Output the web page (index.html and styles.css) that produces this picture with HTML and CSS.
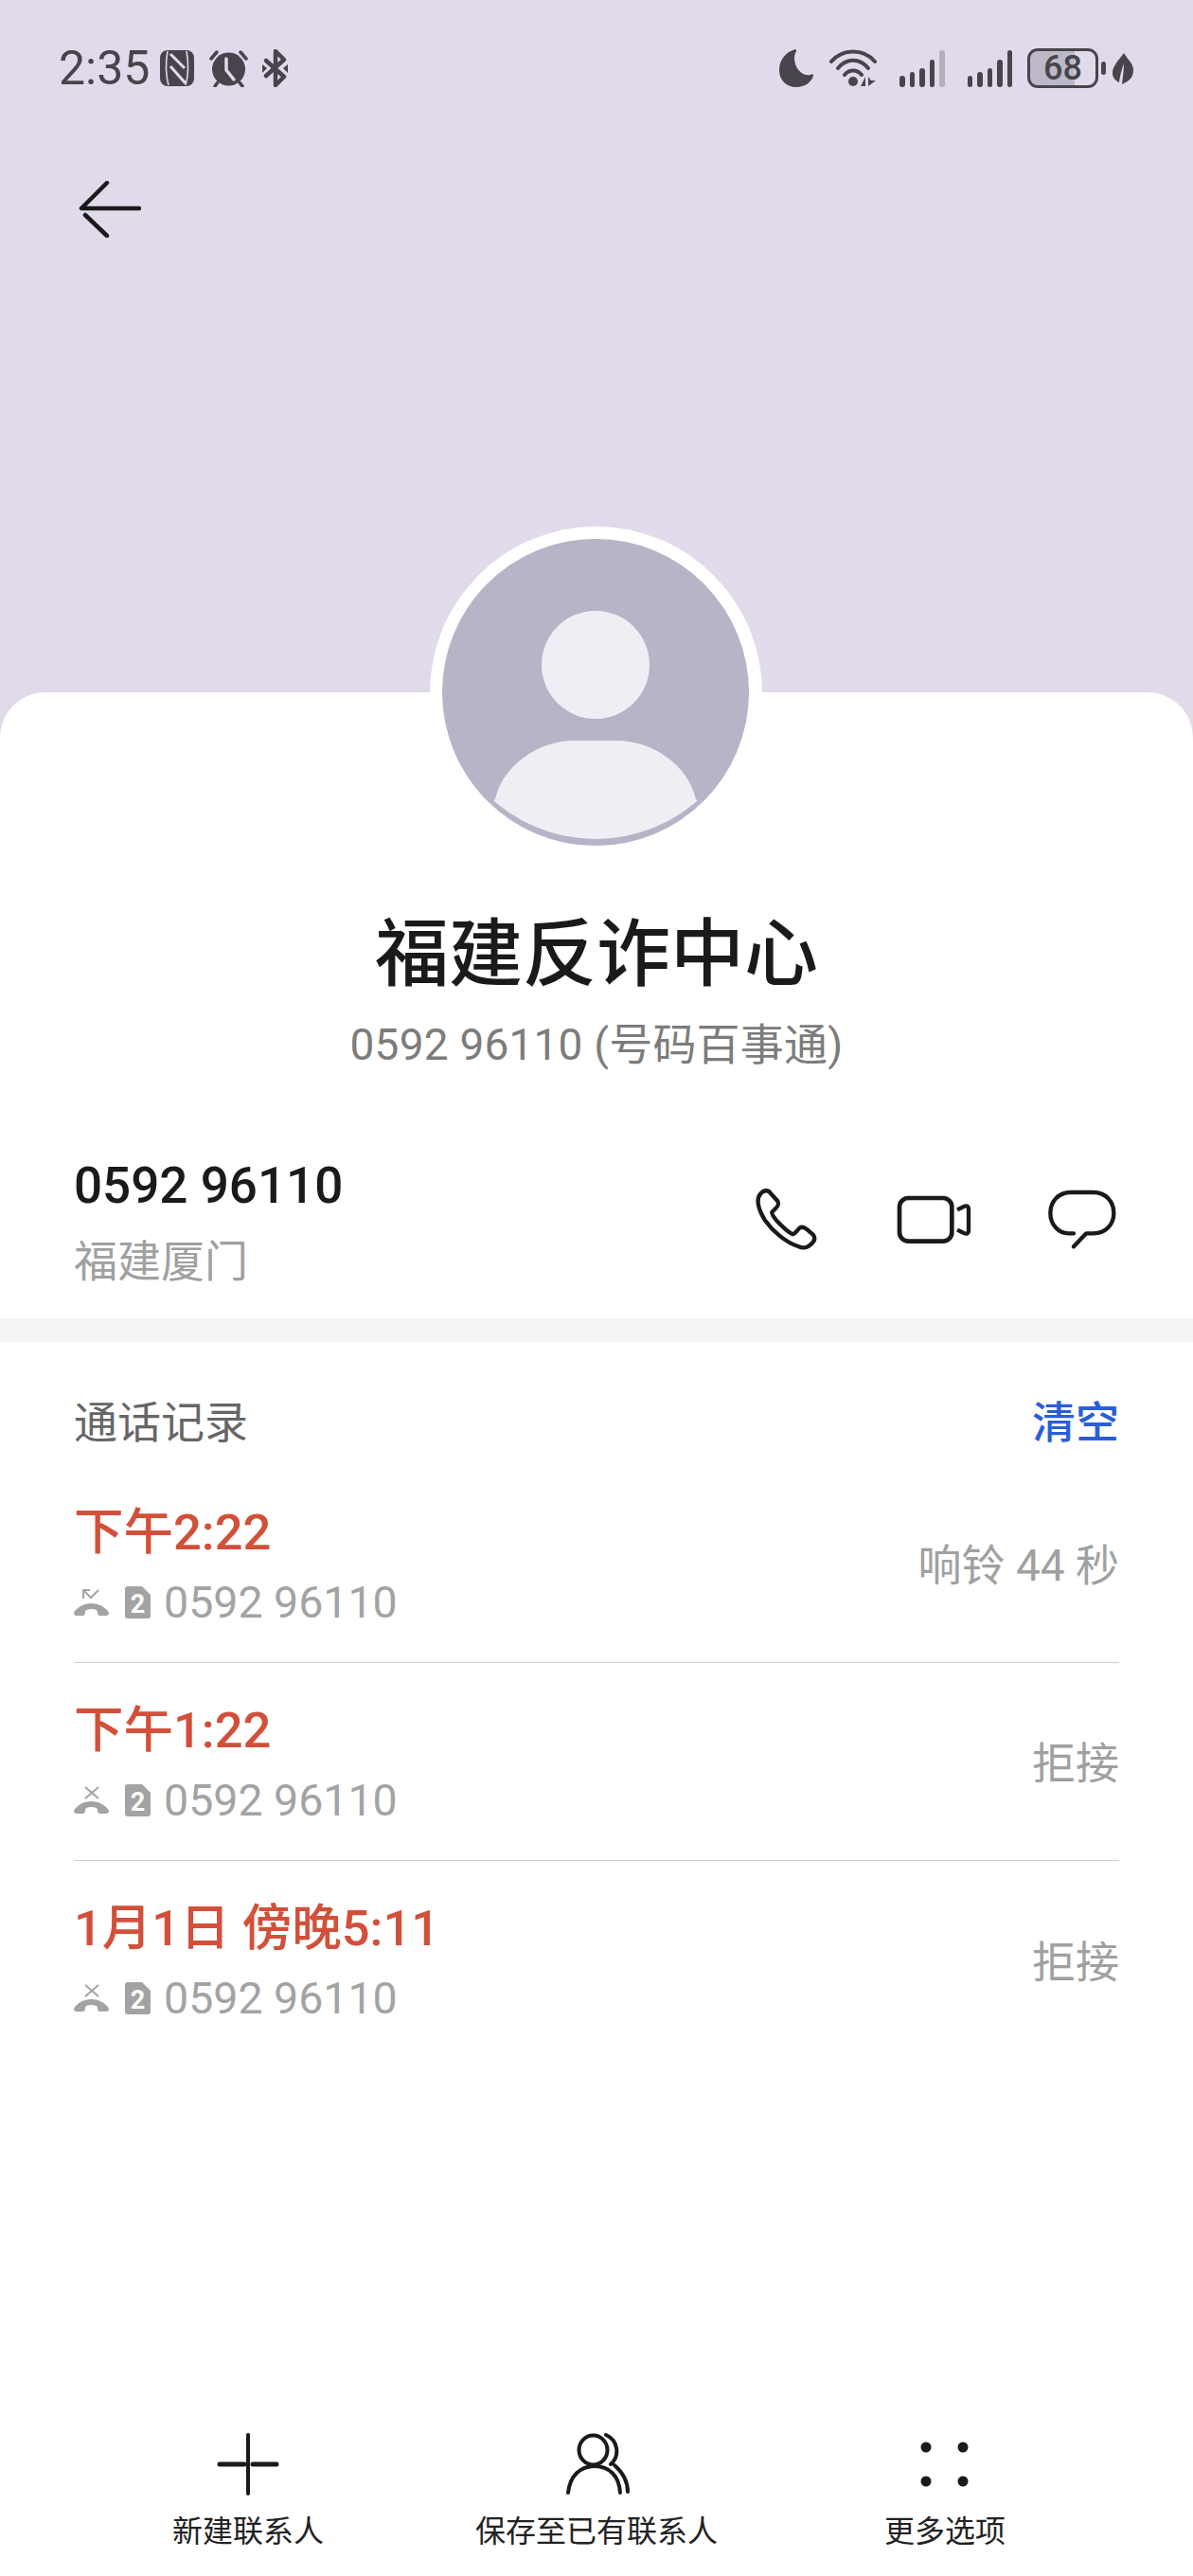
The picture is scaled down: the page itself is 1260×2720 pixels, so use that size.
FILE: index.html
```html
<!DOCTYPE html>
<html lang="zh-CN">
<head>
    <meta charset="UTF-8">
    <title>福建反诈中心</title>
    <link rel="stylesheet" href="styles.css">
</head>
<body>

<div class="screen">
    <header class="hero">
        <div class="status-bar">
            <div class="status-left">
                <span class="clock">2:35</span>
                <svg class="ic-nfc" viewBox="0 0 36 38"><rect width="36" height="38" rx="8" fill="#47444b"/><path d="M8 1C6 12 6 26 9 37M28 1C30 12 30 26 27 37" fill="none" stroke="#e1daea" stroke-width="1.6"/><path d="M11 4L26 19M11 17L27 35" fill="none" stroke="#e1daea" stroke-width="3"/></svg>
                <svg class="ic-alarm" viewBox="0 0 41 39"><circle cx="20.500" cy="20" r="17.500" fill="#47444b"/><path d="M2 9L8 2M39 9L33 2M6 38L9 34M35 38L32 34" stroke="#47444b" stroke-width="3.500" stroke-linecap="round"/><path d="M18 9V21L26 31" fill="none" stroke="#e1daea" stroke-width="3.500" stroke-linecap="round"/></svg>
                <svg class="ic-bt" viewBox="0 0 27 40"><path d="M4 12L23 29L14 38V2L23 11L4 28" fill="none" stroke="#47444b" stroke-width="4.500" stroke-linecap="round" stroke-linejoin="round"/><path d="M0 16L5 20L0 25ZM27 16L22 20L27 25Z" fill="#47444b"/></svg>
            </div>
            <div class="status-right">
                <svg class="ic-moon" viewBox="0 0 36 40"><path d="M17 0C6 3 0 12 0 22C0 33 8 40 18 40C27 40 34 35 36 28C36 26 35 26 33 27C24 29 16 20 16 9C16 6 17 4 18 2C18 1 18 0 17 0Z" fill="#47444b"/></svg>
                <svg class="ic-wifi" viewBox="0 0 50 40"><path d="M2 13C14 -1 36 -1 48 13M9 20C18 9 32 9 41 20M16 27C21 21 29 21 34 27" fill="none" stroke="#47444b" stroke-width="4" stroke-linecap="round"/><circle cx="25" cy="34" r="5" fill="#47444b"/><path d="M38 29V39H33ZM41 29V39L49 33H44Z" fill="#47444b"/></svg>
                <div class="signal">
                    <i class="bar h12"></i><i class="bar h16"></i><i class="bar h20"></i><i class="bar h29"></i><i class="bar h39 dim"></i>
                </div>
                <div class="signal">
                    <i class="bar h12"></i><i class="bar h16"></i><i class="bar h20"></i><i class="bar h29"></i><i class="bar h39"></i>
                </div>
                <div class="battery"><span>68</span></div>
                <i class="battery-nub"></i>
                <svg class="ic-leaf" viewBox="0 0 22 33"><path d="M12 0C6 8 0 14 0 21C0 26 3 29 7 31C8 24 10 16 12 11C12 17 11 25 10 33C17 30 22 26 22 18C22 11 16 7 12 0Z" fill="#47444b"/></svg>
            </div>
        </div>
        <button class="back-btn">
            <svg viewBox="0 0 66 60" width="66" height="60"><path d="M30 2L3 29H64M7 36L30 58" fill="none" stroke="#1a1a1c" stroke-width="4.500" stroke-linecap="round" stroke-linejoin="round"/></svg>
        </button>
    </header>

    <main class="card">
        <div class="avatar">
            <svg viewBox="0 0 324 325" width="324" height="325">
                <defs><clipPath id="avatar-clip"><circle cx="162" cy="154" r="163"/></clipPath></defs>
                <circle cx="162" cy="162" r="162" fill="#b9b3c7"/>
                <circle cx="162" cy="133" r="57" fill="#f0eef4"/>
                <path d="M0 325V300L56 275C64 240 100 213 140 213H184C224 213 260 240 268 275L324 300V325Z" fill="#f0eef4" clip-path="url(#avatar-clip)"/>
            </svg>
        </div>

        <section class="contact-head">
            <h1 class="contact-name">福建反诈中心</h1>
            <p class="contact-sub">0592 96110 (号码百事通)</p>
        </section>

        <section class="number-row">
            <div>
                <div class="number">0592 96110</div>
                <div class="region">福建厦门</div>
            </div>
            <div class="number-actions">
                <svg class="ic-phone" viewBox="170 100 206 206"><path d="M185 135C190 118 205 108 218 115L245 145C250 155 248 160 240 168L228 180C225 185 232 195 245 210C262 228 280 245 293 250C300 250 305 240 315 230C322 225 330 228 338 235L358 252C365 262 362 272 350 282C340 292 325 295 310 288C270 275 230 240 205 205C190 180 180 155 185 135Z" fill="none" stroke="#1a1a1a" stroke-width="13" stroke-linejoin="round"/></svg>
                <svg class="ic-video" viewBox="620 120 240 168"><rect x="632" y="135" width="166" height="137" rx="28" fill="none" stroke="#1a1a1a" stroke-width="14"/><path d="M815 172L838 161C846 158 851 162 851 170V238C851 246 846 250 838 247L815 236" fill="none" stroke="#1a1a1a" stroke-width="13"/></svg>
                <svg class="ic-chat" viewBox="1095 110 225 195"><path d="M1182 252H1165C1135 252 1108 225 1108 187C1108 150 1135 122 1172 122H1245C1282 122 1309 150 1309 187C1309 225 1282 252 1245 252H1222L1182 294" fill="none" stroke="#1a1a1a" stroke-width="13" stroke-linecap="round" stroke-linejoin="round"/></svg>
            </div>
        </section>

        <div class="band"></div>

        <section class="calls">
            <div class="calls-head">
                <span class="calls-title">通话记录</span>
                <span class="calls-clear">清空</span>
            </div>

            <div class="call-row">
                <div class="call-main">
                    <div class="call-time">下午2:22</div>
                    <div class="call-sub">
                        <svg class="ic-missed" viewBox="0 0 37 30"><path d="M0 26C3 20 11 16 18.500 16C26 16 34 20 37 26C37 28 36 29 34 29H28C26 29 25 28 25 25C25 23 22 22 18.500 22C15 22 12 23 12 25C12 28 11 29 9 29H3C1 29 0 28 0 26Z" fill="#a3a3a3"/><path d="M10 11V2H17M10 2L18 10L26 2" fill="none" stroke="#a3a3a3" stroke-width="2"/></svg>
                        <svg class="ic-sim" viewBox="0 0 27 34"><path d="M3 0H18L27 9V31C27 33 26 34 24 34H3C1 34 0 33 0 31V3C0 1 1 0 3 0Z" fill="#a3a3a3"/><text x="13.500" y="28" text-anchor="middle" class="sim-num">2</text></svg>
                        <span>0592 96110</span>
                    </div>
                </div>
                <span class="call-note">响铃 44 秒</span>
            </div>

            <div class="call-row">
                <div class="call-main">
                    <div class="call-time">下午1:22</div>
                    <div class="call-sub">
                        <svg class="ic-missed" viewBox="0 0 37 30"><path d="M0 26C3 20 11 16 18.500 16C26 16 34 20 37 26C37 28 36 29 34 29H28C26 29 25 28 25 25C25 23 22 22 18.500 22C15 22 12 23 12 25C12 28 11 29 9 29H3C1 29 0 28 0 26Z" fill="#a3a3a3"/><path d="M12 1L26 13M26 1L12 13" fill="none" stroke="#a3a3a3" stroke-width="2"/></svg>
                        <svg class="ic-sim" viewBox="0 0 27 34"><path d="M3 0H18L27 9V31C27 33 26 34 24 34H3C1 34 0 33 0 31V3C0 1 1 0 3 0Z" fill="#a3a3a3"/><text x="13.500" y="28" text-anchor="middle" class="sim-num">2</text></svg>
                        <span>0592 96110</span>
                    </div>
                </div>
                <span class="call-note">拒接</span>
            </div>

            <div class="call-row">
                <div class="call-main">
                    <div class="call-time">1月1日 傍晚5:11</div>
                    <div class="call-sub">
                        <svg class="ic-missed" viewBox="0 0 37 30"><path d="M0 26C3 20 11 16 18.500 16C26 16 34 20 37 26C37 28 36 29 34 29H28C26 29 25 28 25 25C25 23 22 22 18.500 22C15 22 12 23 12 25C12 28 11 29 9 29H3C1 29 0 28 0 26Z" fill="#a3a3a3"/><path d="M12 1L26 13M26 1L12 13" fill="none" stroke="#a3a3a3" stroke-width="2"/></svg>
                        <svg class="ic-sim" viewBox="0 0 27 34"><path d="M3 0H18L27 9V31C27 33 26 34 24 34H3C1 34 0 33 0 31V3C0 1 1 0 3 0Z" fill="#a3a3a3"/><text x="13.500" y="28" text-anchor="middle" class="sim-num">2</text></svg>
                        <span>0592 96110</span>
                    </div>
                </div>
                <span class="call-note">拒接</span>
            </div>
        </section>

        <nav class="bottom-bar">
            <div class="bottom-item">
                <svg viewBox="0 0 66 66" width="66" height="66"><path d="M33 2V64" stroke="#1a1a1a" stroke-width="4" stroke-linecap="round"/><path d="M3 33H29M38 33H63" stroke="#1a1a1a" stroke-width="5" stroke-linecap="round"/></svg>
                <span>新建联系人</span>
            </div>
            <div class="bottom-item">
                <svg viewBox="0 0 70 66" width="70" height="66"><ellipse cx="31.500" cy="18" rx="15" ry="15.500" fill="none" stroke="#1a1a1a" stroke-width="4"/><path d="M5 63C7 45 18 35 33 35C48 35 59 45 60 63M45 2C58 8 60 24 50 33M54 34C63 42 68 52 68 62" fill="none" stroke="#1a1a1a" stroke-width="4" stroke-linecap="round"/></svg>
                <span>保存至已有联系人</span>
            </div>
            <div class="bottom-item">
                <svg viewBox="0 0 66 66" width="66" height="66"><circle cx="13" cy="15" r="5.500" fill="#1a1a1a"/><circle cx="52" cy="15" r="5.500" fill="#1a1a1a"/><circle cx="13" cy="51" r="5.500" fill="#1a1a1a"/><circle cx="52" cy="51" r="5.500" fill="#1a1a1a"/></svg>
                <span>更多选项</span>
            </div>
        </nav>
    </main>
</div>

</body>
</html>
```

FILE: styles.css
```css
* {
    box-sizing: border-box;
}
body {
    margin: 0;
    font-family: Roboto, "Noto Sans CJK SC", sans-serif;
    background-color: #fff;
}
h1, p {
    margin: 0;
}
.screen {
    width: 1260px;
    height: 2720px;
    display: flex;
    flex-direction: column;
    background-color: #e1daea;
    overflow: hidden;
}

/* top area */
.hero {
    height: 731px;
    flex-shrink: 0;
    padding-top: 52px;
}
.status-bar {
    display: flex;
    justify-content: space-between;
    align-items: center;
    height: 40px;
    padding: 0 63px 0 62px;
    color: #47444b;
}
.status-left, .status-right {
    display: flex;
    align-items: center;
}
.clock {
    font-size: 50px;
    line-height: 40px;
}
.ic-nfc {
    width: 36px;
    height: 38px;
    margin-left: 11px;
}
.ic-alarm {
    width: 41px;
    height: 39px;
    margin-left: 16px;
}
.ic-bt {
    width: 27px;
    height: 40px;
    margin-left: 15px;
}
.ic-moon {
    width: 36px;
    height: 40px;
}
.ic-wifi {
    width: 50px;
    height: 40px;
    margin-left: 17px;
}
.signal {
    display: flex;
    align-items: flex-end;
    gap: 5px;
    height: 39px;
    margin-left: 24px;
}
.bar {
    width: 5.500px;
    background-color: #47444b;
    border-radius: 3px;
}
.bar.dim {
    background-color: #b3aebc;
}
.h12 { height: 12px; }
.h16 { height: 16px; }
.h20 { height: 20px; }
.h29 { height: 29px; }
.h39 { height: 39px; }
.battery {
    width: 75px;
    height: 42px;
    margin-left: 16px;
    border: 3.500px solid #47444b;
    border-radius: 11px;
    background: linear-gradient(to right, #bcb8c8 68%, transparent 68%);
    display: flex;
    justify-content: center;
    align-items: center;
}
.battery span {
    font-size: 36px;
    line-height: 1;
    font-weight: 500;
}
.battery-nub {
    width: 5px;
    height: 14px;
    margin-left: 3px;
    border-radius: 3px;
    background-color: #47444b;
}
.ic-leaf {
    width: 22px;
    height: 33px;
    margin-left: 7px;
}
.back-btn {
    display: block;
    margin: 99px 0 0 83px;
    padding: 0;
    border: none;
    background: none;
    line-height: 0;
}

/* white sheet */
.card {
    flex: 1;
    display: flex;
    flex-direction: column;
    position: relative;
    background-color: #fff;
    border-radius: 48px 48px 0 0;
}
.avatar {
    position: absolute;
    top: -175px;
    left: 454px;
    width: 351px;
    height: 351px;
    padding: 13px;
    border-radius: 50%;
    background-color: #fff;
    line-height: 0;
}
.contact-head {
    padding-top: 233px;
    text-align: center;
}
.contact-name {
    font-size: 78px;
    line-height: 90px;
    font-weight: 500;
    color: #1a1a1a;
}
.contact-sub {
    margin-top: 22px;
    font-size: 46px;
    line-height: 54px;
    letter-spacing: 0.2px;
    color: #7c7c7c;
}
.number-row {
    display: flex;
    justify-content: space-between;
    align-items: center;
    height: 148px;
    margin-top: 86px;
    padding: 0 80px 0 78px;
}
.number {
    font-size: 53px;
    line-height: 62px;
    font-weight: 500;
    color: #1a1a1a;
}
.region {
    margin-top: 22px;
    font-size: 46px;
    line-height: 54px;
    color: #a0a0a0;
}
.number-actions {
    display: flex;
    align-items: center;
    margin-bottom: 5px;
}
.ic-phone {
    width: 69px;
    height: 69px;
}
.ic-video {
    width: 80px;
    height: 56px;
    margin-left: 81px;
}
.ic-chat {
    width: 75px;
    height: 65px;
    margin-left: 79px;
}
.band {
    height: 25px;
    margin-top: 28px;
    background-color: #f5f5f5;
}

/* call log */
.calls {
    padding: 0 78px;
}
.calls-head {
    display: flex;
    justify-content: space-between;
    align-items: center;
    height: 130px;
    padding-top: 32px;
    font-size: 46px;
}
.calls-title {
    color: #666;
}
.calls-clear {
    color: #2a5ed8;
    font-weight: 500;
}
.call-row {
    display: flex;
    justify-content: space-between;
    align-items: center;
    height: 209px;
    border-bottom: 1px solid #cfcfcf;
}
.call-row:last-child {
    border-bottom: none;
}
.call-main {
    padding-top: 4px;
}
.call-time {
    font-size: 52.500px;
    line-height: 62px;
    font-weight: 500;
    color: #d2503a;
}
.call-sub {
    display: flex;
    align-items: center;
    margin-top: 15px;
    font-size: 46.500px;
    line-height: 56px;
    color: #a3a3a3;
}
.ic-missed {
    width: 37px;
    height: 30px;
}
.ic-sim {
    width: 27px;
    height: 34px;
    margin-left: 17px;
}
.sim-num {
    font-size: 27px;
    font-weight: 700;
    fill: #fff;
}
.call-sub span {
    margin-left: 14px;
}
.call-note {
    padding-bottom: 4px;
    font-size: 46px;
    color: #a0a0a0;
}

/* bottom actions */
.bottom-bar {
    margin-top: auto;
    display: grid;
    grid-template-columns: repeat(3, 1fr);
    padding: 0 78px 24px;
}
.bottom-item {
    display: flex;
    flex-direction: column;
    align-items: center;
    gap: 15px;
    font-size: 32px;
    line-height: 46px;
    color: #222;
}
```
